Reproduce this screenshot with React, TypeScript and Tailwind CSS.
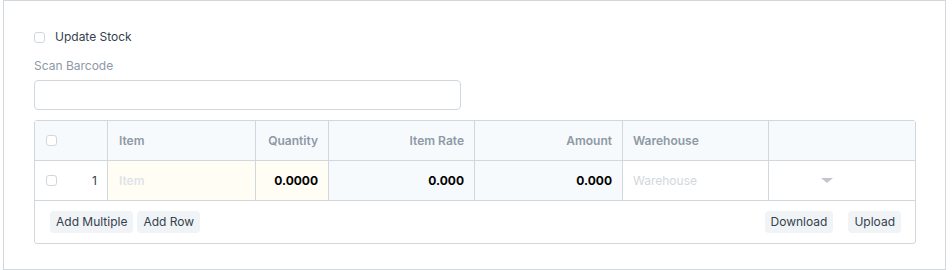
import React from "react";

const cols = "grid grid-cols-[73px_148px_73px_146px_148px_146px_148px]";

function Check() {
  return (
    <span className="inline-block h-[11px] w-[11px] rounded-[3px] border border-[#d1d8dd] bg-white" />
  );
}

function Btn({ label }: { label: string }) {
  return (
    <button className="h-[22px] rounded-[4px] bg-[#f0f4f7] px-[6px] text-[12px] leading-[22px] text-[#36414c]">
      {label}
    </button>
  );
}

export default function App() {
  return (
    <div className="h-[270px] w-[952px] bg-white font-['Inter',sans-serif]">
      <div className="ml-[3px] h-[270px] w-[943px] border border-[#d1d8dd] px-[30px] pt-[28px]">
        <label className="flex items-center gap-[10px] text-[12px] leading-[16px] text-[#36414c]">
          <Check />
          <span>Update Stock</span>
        </label>

        <div className="mt-[13px] text-[12px] leading-[16px] text-[#8d99a6]">Scan Barcode</div>
        <div className="mt-[6px] h-[30px] w-[427px] rounded-[4px] border border-[#d1d8dd] bg-white" />

        <div className="mt-[10px] w-[882px] rounded-[3px] border border-[#d1d8dd]">
          <div className={`${cols} h-[40px] border-b border-[#d1d8dd] bg-[#f7fafc] text-[12px] font-semibold text-[#8d99a6]`}>
            <div className="flex items-center border-r border-[#d1d8dd] pl-[11px]">
              <Check />
            </div>
            <div className="flex items-center border-r border-[#d1d8dd] pl-[11px]">Item</div>
            <div className="flex items-center justify-end border-r border-[#d1d8dd] pr-[10px]">Quantity</div>
            <div className="flex items-center justify-end border-r border-[#d1d8dd] pr-[10px]">Item Rate</div>
            <div className="flex items-center justify-end border-r border-[#d1d8dd] pr-[10px]">Amount</div>
            <div className="flex items-center border-r border-[#d1d8dd] pl-[10px]">Warehouse</div>
            <div />
          </div>

          <div className={`${cols} h-[40px] border-b border-[#d1d8dd] text-[12px]`}>
            <div className="flex items-center justify-between border-r border-[#d1d8dd] pl-[11px] pr-[10px] text-[#36414c]">
              <Check />
              <span>1</span>
            </div>
            <div className="flex items-center border-r border-[#d1d8dd] bg-[#fffdf4] pl-[11px] font-semibold text-[#e0e4e8]">
              Item
            </div>
            <div className="flex items-center justify-end border-r border-[#d1d8dd] bg-[#fffdf4] pr-[10px] font-bold text-black">
              0.0000
            </div>
            <div className="flex items-center justify-end border-r border-[#d1d8dd] bg-[#f7fafc] pr-[10px] font-bold text-black">
              0.000
            </div>
            <div className="flex items-center justify-end border-r border-[#d1d8dd] bg-[#f7fafc] pr-[10px] font-bold text-black">
              0.000
            </div>
            <div className="flex items-center border-r border-[#d1d8dd] pl-[10px] text-[#d1d8dd]">
              Warehouse
            </div>
            <div className="flex items-center pl-[52px]">
              <svg width="12" height="5" viewBox="0 0 12 5">
                <path d="M0 0h12L6 5z" fill="#c0c6cc" />
              </svg>
            </div>
          </div>

          <div className="flex h-[42px] items-center justify-between pl-[15px] pr-[14px]">
            <div className="flex gap-[4px]">
              <Btn label="Add Multiple" />
              <Btn label="Add Row" />
            </div>
            <div className="flex gap-[15px]">
              <Btn label="Download" />
              <Btn label="Upload" />
            </div>
          </div>
        </div>
      </div>
    </div>
  );
}
